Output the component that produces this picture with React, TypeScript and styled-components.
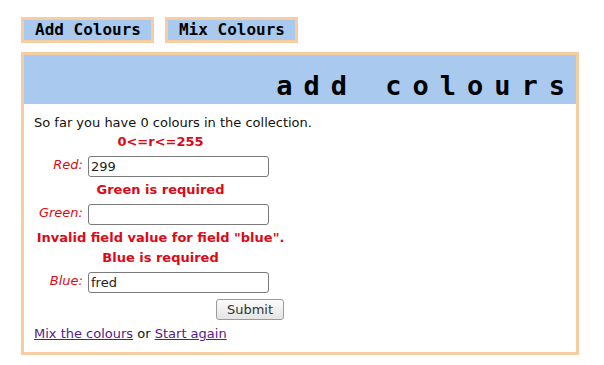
import styled, { createGlobalStyle } from "styled-components";

const GlobalStyle = createGlobalStyle`
  html, body {
    margin: 0;
    padding: 0;
    background: #ffffff;
  }
  body {
    font-family: "DejaVu Sans", sans-serif;
    font-size: 13px;
    color: #111;
  }
`

const peach = "#f5cda0"
const sky = "#a9caee"
const red = "#dd0a16"

const Page = styled.div`
  padding: 17px 0 0 21px;
  width: 558px;
`

const TabBar = styled.nav`
  display: flex;
  gap: 11px;
  margin-bottom: 9px;
`

const Tab = styled.a`
  display: block;
  height: 20px;
  line-height: 20px;
  padding: 0 10px 0 11px;
  background: ${sky};
  border: 3px solid ${peach};
  font-family: "DejaVu Sans Mono", monospace;
  font-weight: bold;
  font-size: 16px;
  color: #000;
  text-decoration: none;
`

const Panel = styled.section`
  border: 3px solid ${peach};
  height: 297px;
  display: flex;
  flex-direction: column;
`

const Header = styled.h1`
  margin: 0;
  height: 49px;
  background: ${sky};
  text-align: right;
  font-family: "DejaVu Sans Mono", monospace;
  font-weight: bold;
  font-size: 27px;
  letter-spacing: 11px;
  line-height: 30px;
  padding: 16px 0 0 0;
  box-sizing: border-box;
  color: #000;
`

const Content = styled.div`
  padding: 11px 10px 0 10px;
`

const Intro = styled.p`
  margin: 0;
  line-height: 16px;
`

const FormGrid = styled.form`
  display: grid;
  grid-template-columns: 54px 199px;
  width: 253px;
  margin-top: 1px;
`

const ErrorRow = styled.div`
  grid-column: 1 / span 2;
  height: 20px;
  line-height: 20px;
  text-align: center;
  font-weight: bold;
  color: ${red};
  white-space: nowrap;
`

const Label = styled.label`
  height: 28px;
  display: flex;
  align-items: center;
  justify-content: flex-end;
  padding-right: 5px;
  padding-bottom: 3px;
  box-sizing: border-box;
  font-style: italic;
  color: ${red};
`

const Field = styled.div`
  height: 28px;
  display: flex;
  align-items: center;
`

const Input = styled.input`
  width: 181px;
  height: 21px;
  box-sizing: border-box;
  border: 1px solid #7a7a7a;
  border-radius: 3px;
  padding: 0 2px;
  font-family: "DejaVu Sans", sans-serif;
  font-size: 13px;
  color: #222;
  background: #fff;
`

const SubmitRow = styled.div`
  grid-column: 1 / span 2;
  height: 27px;
  display: flex;
  align-items: center;
  justify-content: flex-end;
  padding-right: 3px;
`

const Submit = styled.button`
  width: 68px;
  height: 21px;
  padding: 0;
  border: 1px solid #9a9a9a;
  border-radius: 3px;
  background: linear-gradient(#fbfbfb, #e4e4e4);
  font-family: "DejaVu Sans", sans-serif;
  font-size: 13px;
  color: #333;
`

const Links = styled.p`
  margin: 3px 0 0 0;
  line-height: 16px;
`

const Link = styled.a`
  color: #551a8b;
  text-decoration: underline;
`

const fields = [
  { name: "Red", value: "299", before: ["0<=r<=255"] },
  { name: "Green", value: "", before: ["Green is required"] },
  {
    name: "Blue",
    value: "fred",
    before: ['Invalid field value for field "blue".', "Blue is required"],
  },
]

const App = () => {
  return (
    <>
      <GlobalStyle />
      <Page>
        <TabBar>
          <Tab href="#">Add Colours</Tab>
          <Tab href="#">Mix Colours</Tab>
        </TabBar>
        <Panel>
          <Header>add colours</Header>
          <Content>
            <Intro>So far you have 0 colours in the collection.</Intro>
            <FormGrid onSubmit={(e) => e.preventDefault()}>
              {fields.map((f) => (
                <>
                  {f.before.map((msg) => (
                    <ErrorRow key={msg}>{msg}</ErrorRow>
                  ))}
                  <Label key={f.name + "-l"}>{f.name}:</Label>
                  <Field key={f.name + "-f"}>
                    <Input defaultValue={f.value} />
                  </Field>
                </>
              ))}
              <SubmitRow>
                <Submit type="submit">Submit</Submit>
              </SubmitRow>
            </FormGrid>
            <Links>
              <Link href="#">Mix the colours</Link> or <Link href="#">Start again</Link>
            </Links>
          </Content>
        </Panel>
      </Page>
    </>
  )
}

export default App
